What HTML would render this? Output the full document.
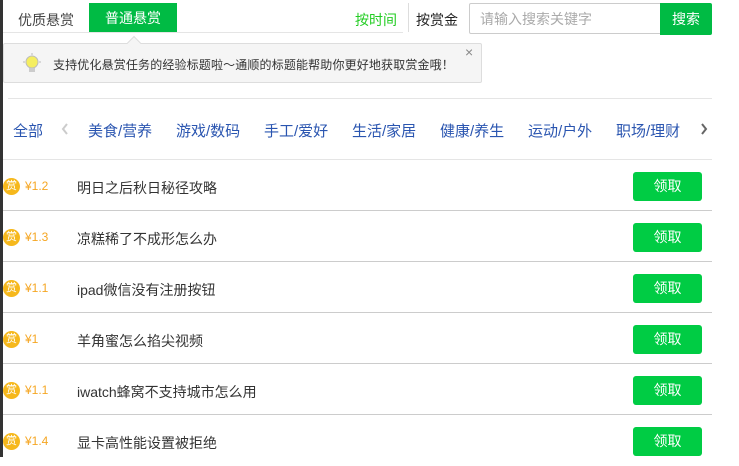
<!DOCTYPE html><html><head><meta charset="utf-8"><style>
body{margin:0;width:739px;height:457px;background:#fff;font-family:"Liberation Sans","Noto Sans CJK SC",sans-serif;position:relative;overflow:hidden}
.a{position:absolute;white-space:nowrap}
.cat{font-size:15px;color:#2a55b0;top:120px}
.row{position:absolute;left:0;width:712px;height:51px}
.row .ln{position:absolute;left:3px;right:0;bottom:0;border-top:1px solid #ccc}
.coin{position:absolute;left:3px;width:17px;height:17px;border-radius:50%;background:#f6b81c;color:#fff;font-size:11px;text-align:center;line-height:17px;top:18px}
.pr{position:absolute;left:25px;top:19px;font-size:12px;color:#f5a623}
.t{position:absolute;left:77px;top:18px;font-size:14px;color:#333}
.b{position:absolute;left:633px;top:12px;width:69px;height:29px;background:#00cc44;border-radius:3px;color:#fff;font-size:14px;text-align:center;line-height:29px}
</style></head><body>
<div class="a" style="left:0;top:0;width:3px;height:457px;background:#333"></div>
<div class="a" style="left:3px;top:32px;width:400px;border-top:1px solid #e5e5e5"></div>
<div class="a" style="left:18px;top:10px;font-size:14px;color:#444">优质悬赏</div>
<div class="a" style="left:89px;top:3px;width:88px;height:29px;background:#00bb44;color:#fff;font-size:14px;text-align:center;line-height:30px">普通悬赏</div>
<div class="a" style="left:355px;top:10px;font-size:14px;color:#22cc22">按时间</div>
<div class="a" style="left:408px;top:3px;height:29px;border-left:1px solid #ddd"></div>
<div class="a" style="left:416px;top:10px;font-size:14px;color:#222">按赏金</div>
<div class="a" style="left:469px;top:3px;width:190px;height:29px;border:1px solid #ccc;border-radius:2px 0 0 2px;color:#aaa;font-size:14px;line-height:30px"><span style="margin-left:10px">请输入搜索关键字</span></div>
<div class="a" style="left:660px;top:3px;width:52px;height:32px;background:#00bb44;color:#fff;font-size:14px;text-align:center;line-height:32px;border-radius:0 2px 2px 0">搜索</div>
<div class="a" style="left:3px;top:43px;width:477px;height:38px;background:#f5f5f5;border:1px solid #ddd;border-radius:2px"></div>
<div class="a" style="left:129px;top:38px;width:9px;height:9px;background:#f5f5f5;border-left:1px solid #ddd;border-top:1px solid #ddd;transform:rotate(45deg)"></div>
<svg class="a" style="left:22px;top:53px" width="20" height="22"><circle cx="10" cy="9" r="6" fill="#f5ee60" stroke="#bbb"/><rect x="7" y="15" width="6" height="4" fill="#ccc"/><g stroke="#bbb"><line x1="10" y1="0" x2="10" y2="2"/><line x1="1" y1="9" x2="3" y2="9"/><line x1="17" y1="9" x2="19" y2="9"/></g></svg>
<div class="a" style="left:53px;top:56px;font-size:12px;color:#333;letter-spacing:0.15px">支持优化悬赏任务的经验标题啦～通顺的标题能帮助你更好地获取赏金哦！</div>
<div class="a" style="left:465px;top:44px;font-size:14px;color:#888">×</div>
<div class="a" style="left:8px;top:98px;width:704px;border-top:1px solid #e5e5e5"></div>
<div class="a cat" style="left:13px">全部</div>
<svg class="a" style="left:61px;top:123px" width="8" height="12"><path d="M6 1 L2 6 L6 11" fill="none" stroke="#ccc" stroke-width="2"/></svg>
<div class="a cat" style="left:88px">美食/营养</div>
<div class="a cat" style="left:176px">游戏/数码</div>
<div class="a cat" style="left:264px">手工/爱好</div>
<div class="a cat" style="left:352px">生活/家居</div>
<div class="a cat" style="left:440px">健康/养生</div>
<div class="a cat" style="left:528px">运动/户外</div>
<div class="a cat" style="left:616px">职场/理财</div>
<svg class="a" style="left:700px;top:123px" width="8" height="12"><path d="M2 1 L6 6 L2 11" fill="none" stroke="#666" stroke-width="2"/></svg>
<div class="a" style="left:3px;top:159px;width:709px;border-top:1px solid #e5e5e5"></div>
<div class="row" style="top:160px"><div class="coin">赏</div><div class="pr">¥1.2</div><div class="t">明日之后秋日秘径攻略</div><div class="b">领取</div><div class="ln"></div></div>
<div class="row" style="top:211px"><div class="coin">赏</div><div class="pr">¥1.3</div><div class="t">凉糕稀了不成形怎么办</div><div class="b">领取</div><div class="ln"></div></div>
<div class="row" style="top:262px"><div class="coin">赏</div><div class="pr">¥1.1</div><div class="t">ipad微信没有注册按钮</div><div class="b">领取</div><div class="ln"></div></div>
<div class="row" style="top:313px"><div class="coin">赏</div><div class="pr">¥1</div><div class="t">羊角蜜怎么掐尖视频</div><div class="b">领取</div><div class="ln"></div></div>
<div class="row" style="top:364px"><div class="coin">赏</div><div class="pr">¥1.1</div><div class="t">iwatch蜂窝不支持城市怎么用</div><div class="b">领取</div><div class="ln"></div></div>
<div class="row" style="top:415px"><div class="coin">赏</div><div class="pr">¥1.4</div><div class="t">显卡高性能设置被拒绝</div><div class="b">领取</div></div>
</body></html>
